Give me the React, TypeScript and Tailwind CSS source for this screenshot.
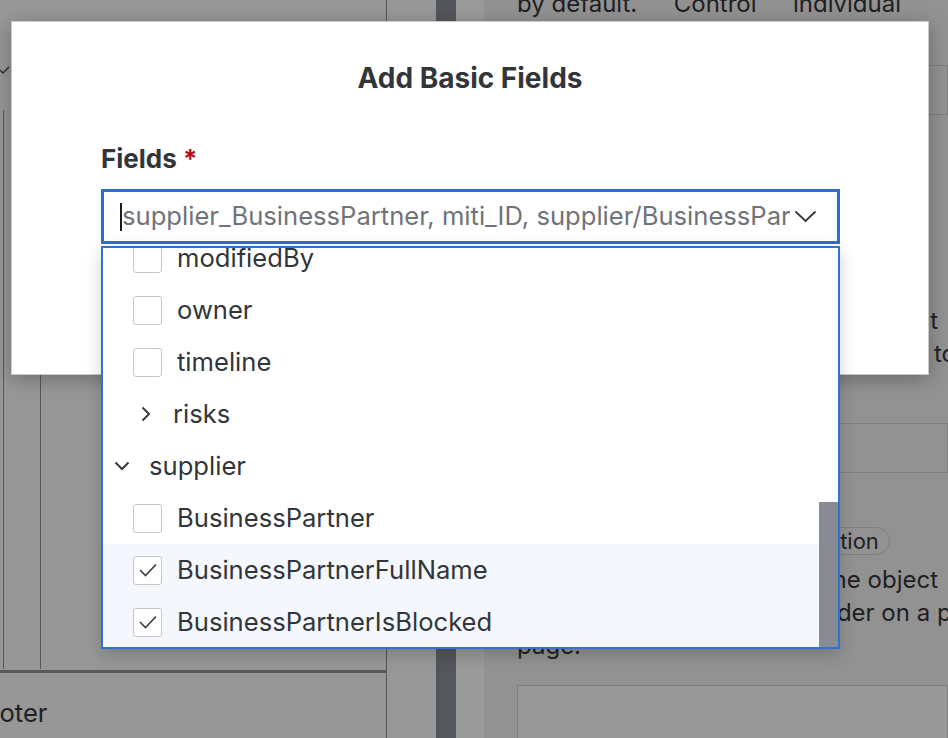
import React from 'react';

type Row =
  | { kind: 'check'; label: string; checked?: boolean; active?: boolean }
  | { kind: 'group'; label: string; open: boolean; level: number };

const rows: Row[] = [
  { kind: 'check', label: 'modifiedBy' },
  { kind: 'check', label: 'owner' },
  { kind: 'check', label: 'timeline' },
  { kind: 'group', label: 'risks', open: false, level: 1 },
  { kind: 'group', label: 'supplier', open: true, level: 0 },
  { kind: 'check', label: 'BusinessPartner' },
  { kind: 'check', label: 'BusinessPartnerFullName', checked: true, active: true },
  { kind: 'check', label: 'BusinessPartnerIsBlocked', checked: true, active: true },
];

const Checkbox: React.FC<{ checked?: boolean }> = ({ checked }) => (
  <span className="flex h-[29px] w-[29px] shrink-0 items-center justify-center rounded-[3px] border-[1.5px] border-[#c6c6c6] bg-white">
    {checked && (
      <svg width="20" height="16" viewBox="0 0 20 16" fill="none">
        <polyline points="2,8 7.5,13.5 18,2.5" stroke="#3a3d42" strokeWidth="1.6" />
      </svg>
    )}
  </span>
);

const Chevron: React.FC<{ open: boolean }> = ({ open }) =>
  open ? (
    <svg width="16" height="10" viewBox="0 0 16 10" fill="none">
      <polyline points="1.5,1.5 8,8 14.5,1.5" stroke="#3a3d42" strokeWidth="2" />
    </svg>
  ) : (
    <svg width="10" height="16" viewBox="0 0 10 16" fill="none">
      <polyline points="1.5,1.5 8,8 1.5,14.5" stroke="#3a3d42" strokeWidth="2" />
    </svg>
  );

const FieldRow: React.FC<{ row: Row }> = ({ row }) => {
  if (row.kind === 'group') {
    return (
      <div
        className={`flex h-[52px] items-center ${row.level === 0 ? 'pl-[11px] gap-[19px]' : 'pl-[38px] gap-[22px]'}`}
      >
        <Chevron open={row.open} />
        <span>{row.label}</span>
      </div>
    );
  }
  return (
    <div className={`flex h-[52px] items-center gap-[15px] pl-[30px] ${row.active ? 'bg-[#f4f8fd]' : ''}`}>
      <Checkbox checked={row.checked} />
      <span>{row.label}</span>
    </div>
  );
};

export default function App() {
  return (
    <div className="relative h-[738px] w-[948px] overflow-hidden bg-[#969696] font-['Inter',sans-serif] text-[25.6px] text-[#1f2023]">
      {/* page behind the overlay */}
      <div className="flex h-full">
        {/* left panel */}
        <div className="flex w-[387px] shrink-0 flex-col border-r border-[#55595e] bg-[#979797]">
          <div className="relative flex-1">
            <svg className="absolute left-[0px] top-[66px]" width="10" height="10" viewBox="0 0 10 10" fill="none">
              <polyline points="0,4 3,7 9,1" stroke="#2a2a2a" strokeWidth="1.4" />
            </svg>
            <div className="ml-[3px] mt-[110px] h-[559px] border-l-[1.5px] border-[#55595e]">
              <div className="ml-[36px] h-full border-l-[1.5px] border-[#55595e]" />
            </div>
          </div>
          <div className="h-[68px] overflow-hidden border-t-[3px] border-[#55595e] pt-[25px] leading-[30px]">
            <span className="-ml-[30px]">Footer</span>
          </div>
        </div>
        <div className="w-[49px] shrink-0 bg-[#989898]" />
        <div className="w-[20px] shrink-0 bg-[#53565b]" />
        <div className="w-[28px] shrink-0 bg-[#9a9a9a]" />

        {/* right panel */}
        <div className="min-w-0 flex-1 overflow-hidden bg-[#929292] pl-[33px] text-[24px] leading-[33px]">
          <div className="-mt-[13px] flex w-[384px] justify-between whitespace-nowrap">
            <span>by default.</span>
            <span>Control</span>
            <span>individual</span>
          </div>
          <div className="whitespace-nowrap">visualization of the fields and</div>
          <div className="mt-[12px] h-[50px] border-[1.5px] border-[#7f7f7f]" />
          <div className="mt-[189px] whitespace-nowrap pr-[10px] text-right">fields that are not relevant</div>
          <div className="-mr-[8px] whitespace-nowrap text-right">it is possible to switch them off to</div>
          <div className="mt-[53px] h-[50px] border-[1.5px] border-[#7f7f7f]" />
          <div className="mt-[54px] flex">
            <span className="ml-[240px] rounded-full border-[1.5px] border-[#7f7f7f] px-[10px] text-[22px] leading-[26px]">
              Navigation
            </span>
          </div>
          <div className="mt-[8px] whitespace-nowrap pr-[10px] text-right">Choose which sections of the object</div>
          <div className="-mr-[68px] whitespace-nowrap text-right">the section you want to render on a project</div>
          <div className="whitespace-nowrap">page.</div>
          <div className="mt-[23px] h-[55px] border-[1.5px] border-[#7f7f7f] bg-[#999999]" />
        </div>
      </div>

      {/* dialog */}
      <div className="absolute left-[11px] top-[21px] h-[354px] w-[918px] border border-[#cacaca] bg-white text-[#32363a] shadow-[0_4px_18px_rgba(0,0,0,0.28)]">
        <h2 className="pt-[40px] text-center text-[28px] font-bold leading-[32px]">Add Basic Fields</h2>
        <div className="relative ml-[89px] mt-[50px] w-[739px]">
          <div className="text-[26px] font-bold leading-[30px]">
            Fields <span className="text-[#b3120f]">*</span>
          </div>
          <div className="mt-[15px] flex h-[55px] items-center border-[3px] border-[#2f6fcc] pl-[16px] pr-[20px]">
            <span className="h-[28px] w-[2px] shrink-0 bg-[#1b1b1b]" />
            <span className="flex-1 overflow-hidden whitespace-nowrap text-[#707378]">
              supplier_BusinessPartner, miti_ID, supplier/BusinessPartner
            </span>
            <svg className="ml-[4px] shrink-0" width="23" height="13" viewBox="0 0 23 13" fill="none">
              <polyline points="1.5,1.5 11.5,11 21.5,1.5" stroke="#32363a" strokeWidth="1.8" />
            </svg>
          </div>

          {/* dropdown */}
          <div className="absolute left-0 top-[102px] z-10 h-[403px] w-[739px] overflow-hidden border-2 border-[#3171cf] bg-white shadow-[0_6px_16px_rgba(0,0,0,0.18)]">
            <div className="-mt-[16px]">
              {rows.map((row) => (
                <FieldRow key={row.label} row={row} />
              ))}
            </div>
            <div className="absolute bottom-0 right-0 h-[145px] w-[19px] bg-[#878c93]" />
          </div>
        </div>
      </div>
    </div>
  );
}
